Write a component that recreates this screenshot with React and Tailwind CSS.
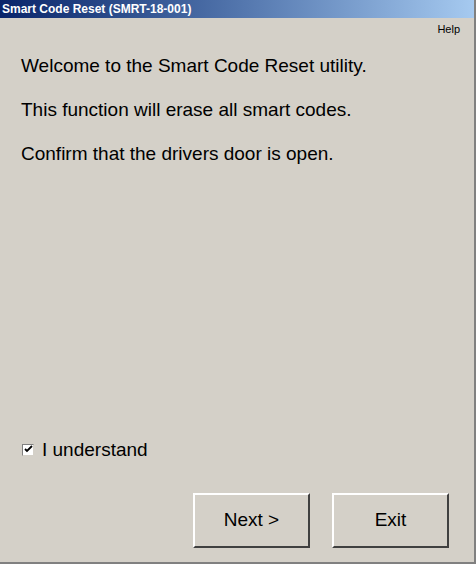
export default function App() {
  return (
    <div className="w-[476px] h-[564px] bg-[#d4d0c8] flex flex-col border-r-2 border-b-2 border-[#808080] font-['Liberation_Sans',Arial,sans-serif] text-black overflow-hidden">
      {/* title bar */}
      <div className="h-[18px] shrink-0 bg-gradient-to-r from-[#0a246a] to-[#a6caf0] flex items-center pl-[2px]">
        <span className="text-white text-[12px] font-bold leading-none">
          Smart Code Reset (SMRT-18-001)
        </span>
      </div>

      <div className="flex justify-end pr-[14px] pt-[6px]">
        <span className="text-[11px] leading-none">Help</span>
      </div>

      <div className="flex flex-col gap-[23px] pl-[21px] pt-[20px] text-[19px] leading-[21px]">
        <p>Welcome to the Smart Code Reset utility.</p>
        <p>This function will erase all smart codes.</p>
        <p>Confirm that the drivers door is open.</p>
      </div>

      <div className="flex-1" />

      <label className="flex items-center gap-[8px] pl-[22px] text-[19px] leading-[21px]">
        <span className="w-[12px] h-[12px] bg-white border border-t-[#808080] border-l-[#808080] border-r-[#d4d0c8] border-b-[#d4d0c8] flex items-center justify-center">
          <svg width="9" height="9" viewBox="0 0 9 9">
            <path d="M1 4 L3 6 L8 1" stroke="#000" strokeWidth="1.8" fill="none" />
          </svg>
        </span>
        I understand
      </label>

      <div className="flex justify-end gap-[22px] pr-[25px] pt-[33px] pb-[14px]">
        <button className="w-[117px] h-[55px] bg-[#d4d0c8] border-2 border-t-white border-l-white border-r-[#404040] border-b-[#404040] text-[19px]">
          Next &gt;
        </button>
        <button className="w-[117px] h-[55px] bg-[#d4d0c8] border-2 border-t-white border-l-white border-r-[#404040] border-b-[#404040] text-[19px]">
          Exit
        </button>
      </div>
    </div>
  );
}
